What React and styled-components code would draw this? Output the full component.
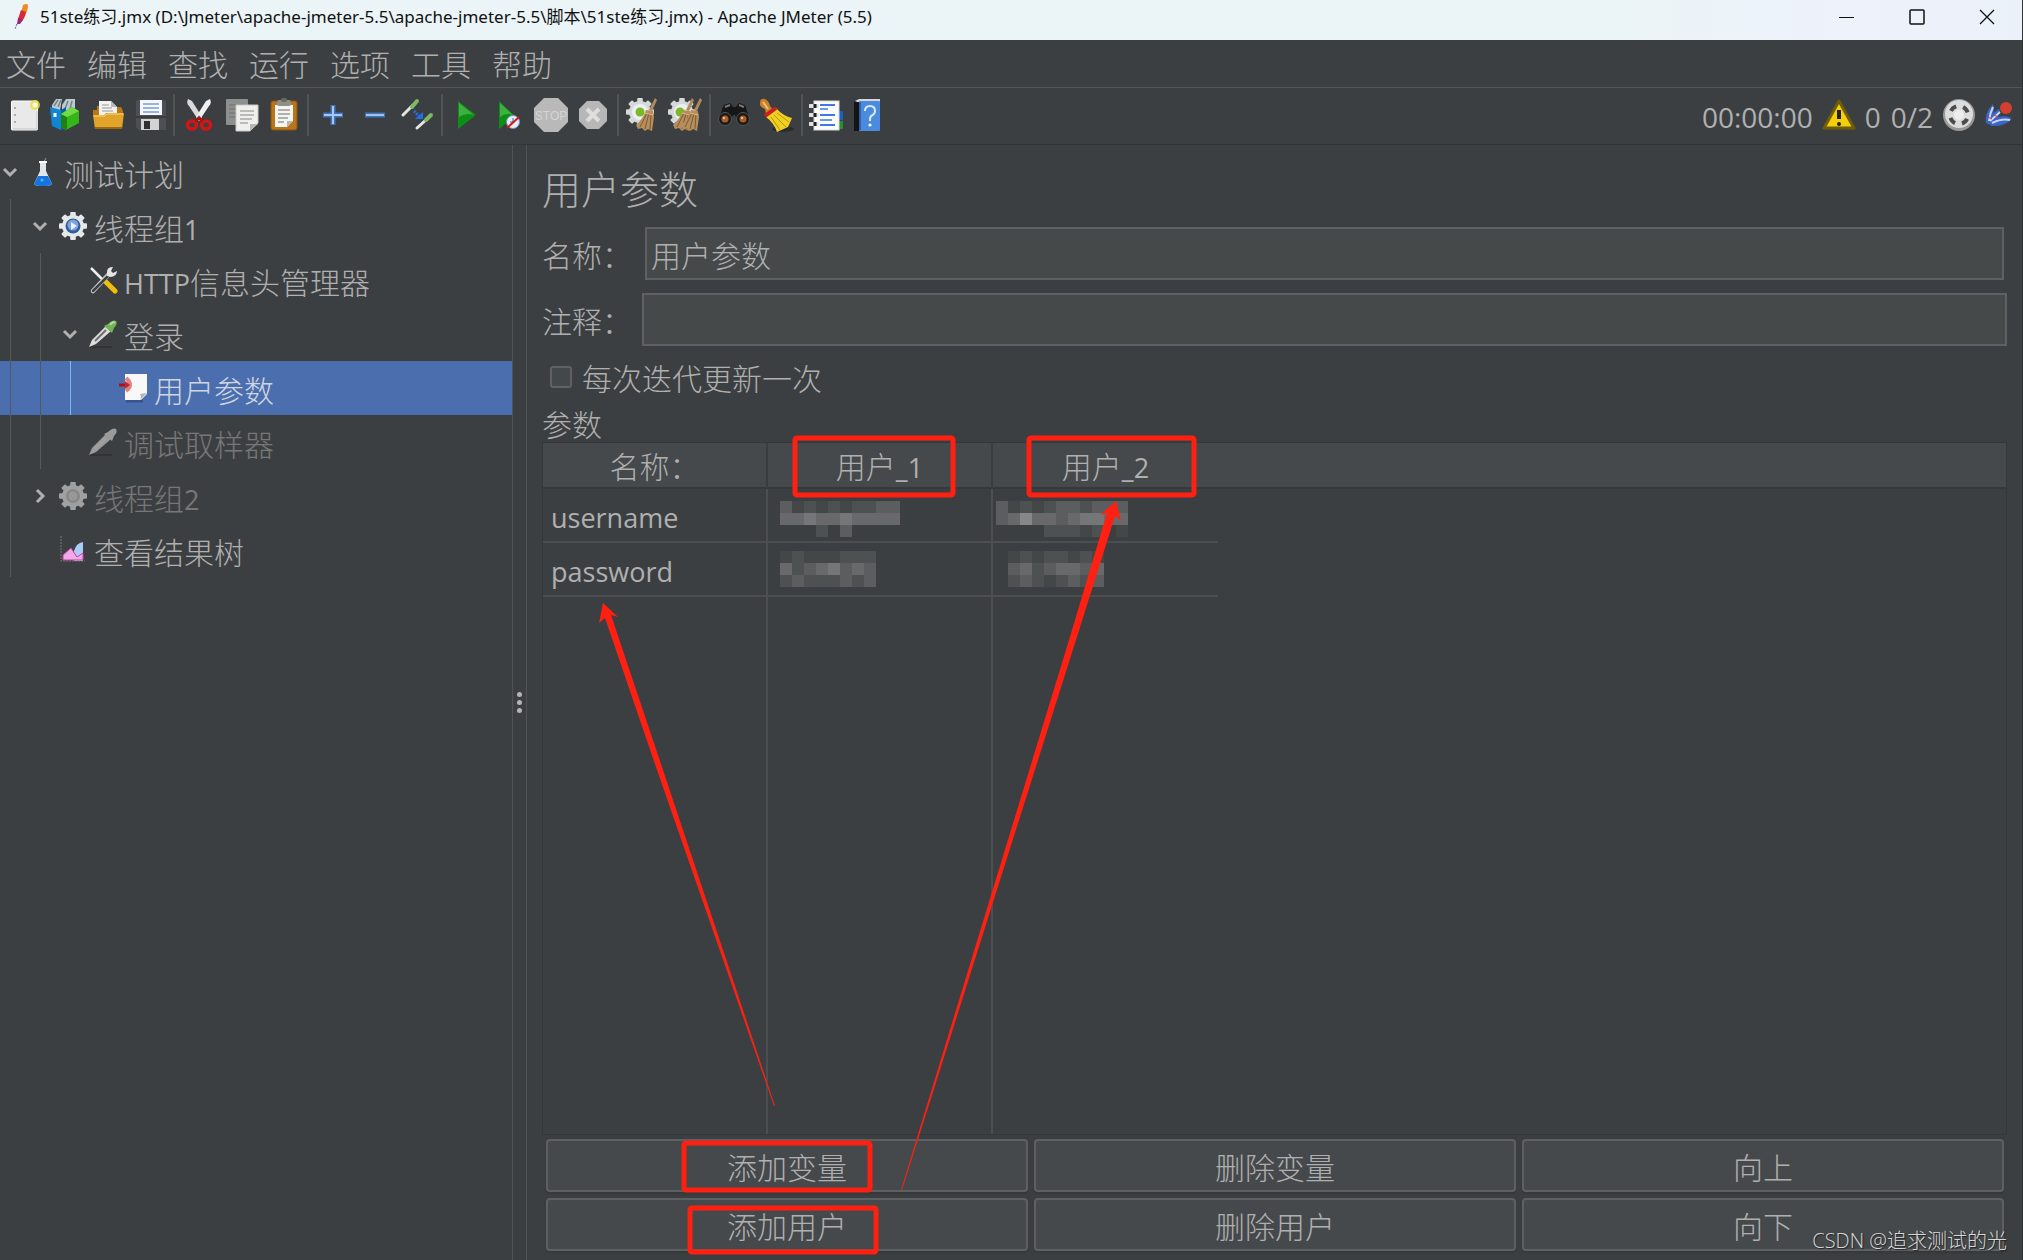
import React, { useState } from "react";
import styled, { createGlobalStyle } from "styled-components";

const cjk = `"Noto Sans CJK SC", sans-serif`;
const latin = `"Open Sans", "Noto Sans CJK SC", sans-serif`;

const GlobalStyle = createGlobalStyle`
  * { box-sizing: border-box; }
  html, body, #root { height: 100%; }
  body {
    margin: 0;
    background: #3c3f41;
    color: #b0b0b0;
    font-family: ${ cjk };
    font-size: 30px;
    font-weight: 300;
  }
  button, input { font: inherit; color: inherit; }
`;

/* ---------- icons ---------- */

const gearTeeth = [ 0, 45, 90, 135, 180, 225, 270, 315 ];

function Gear( { cx, cy, r, fill } ){
  return ( <g fill={ fill }>
    <circle cx={ cx } cy={ cy } r={ r * 0.78 } />
    { gearTeeth.map( a => (
      <rect
        key={ a }
        x={ cx - r * 0.2 } y={ cy - r } width={ r * 0.4 } height={ r * 0.5 } rx="1"
        transform={ `rotate(${ a } ${ cx } ${ cy })` }
      />
    ) ) }
  </g> );
}

function Broom( { x } ){
  return ( <g transform={ `translate(${ x } 0)` }>
    <path d="M29 1 L31 3 L26 14 L23 13 Z" fill="#b08a5e" />
    <path d="M20 13 L27 14 L28 20 L26 34 L22 32 L19 34 L16 31 L12 32 L10 28 Q17 22 20 13 Z" fill="#b68d5c" />
    <path d="M21 16 L14 30 M23 16 L19 32 M25 17 L24 32" stroke="#7d5a34" fill="none" />
    <path d="M19 16 L27 18" stroke="#e0bd8a" fill="none" />
  </g> );
}

function Pipette( { gray } ){
  return ( <g>
    <path d="M2 28 H24" stroke="#2b2d2e" strokeWidth="2" opacity="0.7" />
    <path d="M18 7 L23 12 L8 25 L1 28 L4 21 Z" fill={ gray ? "#9b9b9b" : "#dcdcdc" } />
    <path d="M18 11 L7 22" stroke={ gray ? "#a0a0a0" : "#6b706e" } strokeWidth="2" />
    <path d="M16 7 L20 5 Q25 0 28 2 Q30 5 26 9 L24 14 Z" fill={ gray ? "#9b9b9b" : "#72b356" } />
    { !gray && <path d="M22 6 Q25 2 27 4" stroke="#b4dd9a" strokeWidth="2" fill="none" /> }
  </g> );
}

const toolIcons = {
  new: <g>
    <rect x="6.5" y="4" width="26" height="29" rx="1" fill="#e9e9e9" stroke="#fff" />
    <path d="M8 32 H32 V14" stroke="#c2c2c2" fill="none" />
    <path d="M10 10 v2 M10 17 v2 M10 24 v2" stroke="#999" strokeWidth="1.5" />
    <circle cx="30" cy="8" r="5" fill="#eadb4b" opacity="0.8" />
    <circle cx="30" cy="8" r="2.5" fill="#fffbd0" />
  </g>,
  templates: <g>
    <path d="M5 8 L9 2 H15 L13 13 H5 Z M15 8 L19 2 H28 V14 H15 Z" fill="#bccbd0" />
    <path d="M7 9 L11 3 M11 10 L14 3 M18 12 L21 4 M23 12 L25 4" stroke="#73858b" strokeWidth="1.5" />
    <path d="M3 10 L14 13 V33 L5 29 Z" fill="#0e86d4" />
    <path d="M14 13 L19 10 V30 L14 33 Z" fill="#0a5f9e" />
    <path d="M8 16 v4" stroke="#fff" strokeWidth="3" />
    <path d="M14 17 L25 10 L32 14 V26 L19 33 L14 30 Z" fill="#36b51b" />
    <path d="M14 17 L20 20 V33 L14 30 Z" fill="#1f7f10" />
    <path d="M14 17 L25 10 L32 14 L20 20 Z" fill="#70db45" />
  </g>,
  open: <g>
    <path d="M4 18 V13 H8 V9 H12 V20 H4 Z M28 10 H32 L34 14 V20 H28 Z" fill="#b87914" />
    <path d="M10 4 H22 L28 10 V20 H10 Z" fill="#f2f2f2" />
    <path d="M22 4 V10 H28 Z" fill="#b9b9b9" />
    <path d="M13 8 h7 M13 11 h10 M13 14 h11" stroke="#999" />
    <path d="M4 18 H15 L17 16 H35 L33 32 H6 Z" fill="#e2a32b" />
    <path d="M5 19 H16 L18 17 H34" stroke="#f9d273" fill="none" />
    <path d="M6 31 H33" stroke="#9c680d" strokeWidth="2" />
  </g>,
  save: <g>
    <path d="M5 5 Q5 3 7 3 H33 Q35 3 35 5 V33 H8 L5 30 Z" fill="#4c4f53" />
    <rect x="9" y="3" width="22" height="15" fill="#f3f7fc" />
    <path d="M12 7 h16 M12 11 h16 M12 15 h16" stroke="#7e9fc9" strokeWidth="1.5" />
    <path d="M5 20 H35" stroke="#26282a" />
    <rect x="10" y="22" width="18" height="11" fill="#d3d3d3" />
    <rect x="13" y="24" width="6" height="8" fill="#2d2f31" />
  </g>,
  cut: <g>
    <path d="M7 2 Q5 6 8 9 L18 24 L21 20 L11 4 Z" fill="#dadcdc" />
    <path d="M29 2 Q31 6 28 9 L18 24 L15 20 L25 4 Z" fill="#f1f1f1" />
    <circle cx="18" cy="20" r="1.5" fill="#888" />
    <ellipse cx="11" cy="28" rx="4.5" ry="4" fill="none" stroke="#d41515" strokeWidth="3.5" />
    <ellipse cx="25" cy="28" rx="4.5" ry="4" fill="none" stroke="#d41515" strokeWidth="3.5" />
    <path d="M14 24 L18 21 L22 24" stroke="#b30e0e" strokeWidth="3" fill="none" />
  </g>,
  copy: <g>
    <rect x="3" y="2" width="22" height="26" rx="1" fill="#8e9090" />
    <path d="M6 8 h15 M6 12 h15 M6 16 h15 M6 20 h15" stroke="#6f7171" />
    <path d="M13 8 H35 V26 L27 34 H13 Z" fill="#efefec" stroke="#c9c9c5" />
    <path d="M17 14 h14 M17 18 h14 M17 22 h12 M17 26 h8" stroke="#aaa" strokeWidth="1.5" />
    <path d="M27 34 V27 H35 Z" fill="#b7b7b2" />
  </g>,
  paste: <g>
    <rect x="6" y="4" width="26" height="29" rx="2" fill="#b9751a" stroke="#8a5410" />
    <path d="M10 8 H28 V24 L22 30 H10 Z" fill="#f4f4f1" />
    <rect x="12" y="3" width="14" height="6" rx="2" fill="#8f8f88" />
    <rect x="16" y="1" width="6" height="4" rx="2" fill="#696963" />
    <path d="M13 13 h12 M13 17 h12 M13 21 h10 M13 25 h6" stroke="#999" strokeWidth="1.5" />
    <path d="M22 30 V24 H28 Z" fill="#b7b7b2" />
  </g>,
  expand: <g>
    <path d="M18 8 V28 M8 18 H28" stroke="#3f74bd" strokeWidth="5" />
    <path d="M18 9 V27 M9 18 H27" stroke="#a5c6ee" strokeWidth="2" />
  </g>,
  collapse: <g>
    <path d="M8 18 H28" stroke="#3f74bd" strokeWidth="5" />
    <path d="M9 18 H27" stroke="#9fc1eb" strokeWidth="2" />
  </g>,
  toggle: <g>
    <path d="M4 18 L14 8" stroke="#e5e5e5" strokeWidth="3" strokeLinecap="round" />
    <path d="M13 10 L18 4" stroke="#7db864" strokeWidth="4" strokeLinecap="round" />
    <path d="M18 31 L28 22" stroke="#e5e5e5" strokeWidth="3" strokeLinecap="round" />
    <path d="M27 23 L32 18" stroke="#7db864" strokeWidth="4" strokeLinecap="round" />
    <path d="M15 14 L20 19" stroke="#1e6fe8" strokeWidth="3" strokeDasharray="2 1" />
    <path d="M24 15 V22 H16 Z" fill="#1e6fe8" />
  </g>,
  start: <g>
    <path d="M9 4 L27 18 L9 32 Z" fill="#0d8f14" />
    <path d="M10 6 L25 18 Q17 15 10 20 Z" fill="#3fae43" />
  </g>,
  startNoTimers: <g>
    <path d="M8 4 L24 19 L8 32 Z" fill="#0d8f14" />
    <path d="M9 6 L22 18 Q15 15 9 20 Z" fill="#3fae43" />
    <circle cx="22" cy="25" r="6.5" fill="#e8eef6" stroke="#6d93bf" />
    <path d="M22 21 V25 H19" stroke="#3b6fae" fill="none" />
    <path d="M16 31 L28 20" stroke="#d21616" strokeWidth="2" />
  </g>,
  stop: <g>
    <path d="M11 1 H25 L35 11 V25 L25 35 H11 L1 25 V11 Z" fill="#b9b9b9" />
    <text x="18" y="23" textAnchor="middle" fontFamily="Liberation Sans" fontSize="12" fontWeight="400" fill="#d4d4d4">STOP</text>
  </g>,
  shutdown: <g>
    <path d="M12 4 H24 L32 12 V24 L24 32 H12 L4 24 V12 Z" fill="#b7b7b7" />
    <path d="M12 12 L24 24 M24 12 L12 24" stroke="#dedede" strokeWidth="4" />
  </g>,
  clear: <g>
    <Gear cx={ 15 } cy={ 15 } r={ 14 } fill="#d5d9d9" />
    <circle cx="15" cy="15" r="8" fill="#eef0f0" />
    <circle cx="15" cy="15" r="4.5" fill="#7bb928" />
    <Broom x={ 1 } />
  </g>,
  clearAll: <g>
    <Gear cx={ 15 } cy={ 15 } r={ 14 } fill="#d5d9d9" />
    <circle cx="15" cy="15" r="8" fill="#eef0f0" />
    <circle cx="13" cy="15" r="4.5" fill="#7bb928" />
    <Broom x={ -4 } />
    <Broom x={ 4 } />
  </g>,
  search: <g>
    <path d="M7 8 L13 6 L16 10 H19 L22 6 L28 8 L33 23 H20 L18 18 H16 L14 23 H1 Z" fill="#161616" />
    <path d="M8 10 L13 8 M22 8 L27 10" stroke="#777" strokeWidth="2" />
    <circle cx="8" cy="22" r="6.5" fill="#1a1a1a" stroke="#555" />
    <circle cx="26" cy="22" r="6.5" fill="#1a1a1a" stroke="#555" />
    <circle cx="8" cy="22" r="3.5" fill="#a85c28" />
    <circle cx="26" cy="22" r="3.5" fill="#a85c28" />
    <circle cx="7" cy="21" r="1.2" fill="#eab98d" />
    <circle cx="25" cy="21" r="1.2" fill="#eab98d" />
  </g>,
  searchReset: <g>
    <ellipse cx="24" cy="32" rx="11" ry="3" fill="#2a2c2d" />
    <path d="M1 6 Q1 1 6 2 Q10 4 11 9 L14 13 L7 17 L6 12 Q0 10 1 6 Z" fill="#c9822b" />
    <path d="M4 5 L9 12" stroke="#f3c274" strokeWidth="2" />
    <path d="M17 11 Q24 19 33 21 L29 30 L18 35 Q15 26 7 20 Z" fill="#efcf22" />
    <path d="M15 18 L27 30 M12 20 L21 33 M18 16 L30 25" stroke="#b8960b" fill="none" />
    <path d="M6 19 L17 11" stroke="#cf1d1d" strokeWidth="4" />
  </g>,
  functions: <g>
    <rect x="26" y="14" width="8" height="9" fill="#1b5fc4" />
    <rect x="26" y="24" width="8" height="8" fill="#27902b" />
    <rect x="5" y="4" width="25" height="29" fill="#fbfbfb" stroke="#d8d8d8" />
    <path d="M11 8 h15 M11 18 h15 M11 28 h15" stroke="#3e7be0" strokeWidth="2" />
    <path d="M11 12 h8 M11 23 h12" stroke="#3e7be0" strokeWidth="1.5" />
    <path d="M1 9 h7 M1 18 h7 M1 27 h7" stroke="#dfdfdf" strokeWidth="4" strokeLinecap="round" />
    <path d="M6 7 v4 M6 16 v4 M6 25 v4" stroke="#1f1f1f" strokeWidth="3" />
  </g>,
  help: <g>
    <path d="M3 5 L8 2 V34 H3 Z" fill="#141414" />
    <path d="M4 4 L8 2 H29 V5 H6 Z" fill="#d6d6d6" />
    <rect x="8" y="4" width="21" height="30" rx="1" fill="#4a8be0" />
    <path d="M9 5 V33" stroke="#2d62ad" strokeWidth="2" />
    <path d="M14 14 Q14 9 19 9 Q24 9 24 14 Q24 17 20 19 Q19 20 19 24" stroke="#dce9fb" strokeWidth="2" fill="none" />
    <circle cx="19" cy="28" r="1.6" fill="#fff" />
  </g>,
};

const treeIcons = {
  plan: <g>
    <path d="M15 6 L18 1" stroke="#999" />
    <path d="M12 6 H18 V14 L24 27 Q23 29 15 29 Q7 29 6 27 L12 14 Z" fill="#dfe6ec" />
    <path d="M10 19 H20 L24 27 Q23 29 15 29 Q7 29 6 27 Z" fill="#1574dd" />
    <path d="M11 5 H19" stroke="#fff" strokeWidth="2" />
    <circle cx="14" cy="23" r="1.5" fill="#5fb0ff" />
  </g>,
  group: <g>
    <Gear cx={ 15 } cy={ 15 } r={ 14 } fill="#e6e8ea" />
    <circle cx="15" cy="15" r="7.5" fill="#2f5d9f" />
    <circle cx="15" cy="14" r="5.5" fill="#7da3d6" />
    <path d="M13 11 L19 15 L13 19 Z" fill="#e8f0fb" />
  </g>,
  groupOff: <g>
    <Gear cx={ 15 } cy={ 15 } r={ 14 } fill="#a0a0a0" />
    <circle cx="15" cy="15" r="7" fill="#878787" />
    <circle cx="15" cy="15" r="4.5" fill="#989898" />
  </g>,
  config: <g>
    <path d="M3 3 L17 17" stroke="#eee" strokeWidth="2.5" />
    <path d="M17 16 L27 26" stroke="#f2bd08" strokeWidth="5" strokeLinecap="round" />
    <path d="M21 9 L5 26" stroke="#ccc" strokeWidth="4.5" strokeLinecap="round" />
    <path d="M20 11 L5 26" stroke="#3c3f41" strokeWidth="2.5" strokeLinecap="round" />
    <path d="M25 2 Q19 2 19 7 L19 11 L23 12 Q29 11 29 6 L25 8 L23 6 Z" fill="#e4e4e4" />
  </g>,
  sampler: <Pipette />,
  samplerOff: <Pipette gray />,
  params: <g>
    <path d="M8 28 H25" stroke="#2d4678" strokeWidth="3" opacity="0.6" />
    <path d="M7 1 H29 V21 L23 27 H7 Z" fill="#f8f8f8" />
    <path d="M22 27 Q24 23 22 21 L29 20 Z" fill="#b4b4b4" />
    <path d="M8 5 Q16 12 8 18" stroke="#e28383" strokeWidth="4" fill="none" />
    <path d="M1 12 H8" stroke="#b30f14" strokeWidth="3" />
    <path d="M7 8 L12 12 L7 16 Z" fill="#c3262b" />
  </g>,
  results: <g>
    <path d="M3 1 V26 H27" stroke="#777" fill="none" strokeDasharray="2 1" />
    <path d="M16 26 V16 Q18 8 25 7 V26 Z" fill="#a9cbf5" />
    <path d="M5 25 V20 L13 13 L19 22 L25 18 V25 Z" fill="#f1a8e6" stroke="#c2419f" />
  </g>,
};

/* ---------- styled parts ---------- */

const Window = styled.div`
  position: relative;
  min-height: 100%;
  height: 100vh;
  display: flex;
  flex-direction: column;
  overflow: hidden;
  border-right: 1px solid #2f3234;
`;
const TitleBar = styled.header`
  height: 40px;
  flex-shrink: 0;
  display: flex;
  align-items: center;
  padding: 0 0 7px 12px;
  background: linear-gradient( 90deg, #ebf4f7 80%, #eef2fb 92%, #ebf1f8 );
  color: #111;
  font-family: "Noto Sans", "Noto Sans CJK SC", sans-serif;
  font-size: 17px;
  font-weight: 400;
`;
const TitleText = styled.span`
  flex: 1;
  padding-left: 8px;
  line-height: 32px;
`;
const WindowButton = styled.button`
  width: 70px;
  height: 32px;
  padding: 0;
  border: 0;
  background: none;
  display: grid;
  place-items: center;
`;
const MenuBar = styled.nav`
  display: flex;
  flex-shrink: 0;
  gap: 21px;
  height: 48px;
  padding: 0 6px;
  border-bottom: 1px solid #555;
`;
const MenuItem = styled.button`
  height: 46px;
  padding: 0;
  border: 0;
  background: none;
  line-height: 46px;
`;
const ToolBar = styled.div`
  display: flex;
  align-items: center;
  flex-shrink: 0;
  height: 57px;
  padding: 0 8px 2px 2px;
  border-bottom: 1px solid #323537;
`;
const ToolButton = styled.button`
  width: 42px;
  height: 42px;
  padding: 0;
  border: 0;
  background: none;
  display: grid;
  place-items: center;
`;
const Divider = styled.span`
  width: 2px;
  height: 42px;
  margin: 0 3px;
  background: #515354;
`;
const Status = styled.div`
  margin-left: auto;
  display: flex;
  align-items: center;
  gap: 8px;
  font-family: ${ latin };
  font-size: 28px;
  font-weight: 400;
`;
const Counter = styled.span`
  padding: 4px 1px 0;
`;
const Body = styled.div`
  flex: 1;
  min-height: 0;
  display: flex;
`;
const Tree = styled.ul`
  width: 512px;
  flex-shrink: 0;
  margin: 0;
  padding: 0;
  list-style: none;
`;
const TreeRow = styled.li`
  display: flex;
  align-items: center;
  height: 54px;
  background: ${ p => p.$selected ? "#4b6eaf" : "none" };
  color: ${ p => p.$selected ? "#d0d6e2" : p.$off ? "#777777" : "inherit" };
`;
const Indent = styled.span`
  width: 20px;
  height: 100%;
  margin-left: 10px;
  border-left: 1px solid ${ p => p.$active ? "#7fb5f0" : "#565859" };
`;
const Twisty = styled.button`
  width: 20px;
  height: 30px;
  padding: 0;
  border: 0;
  background: none;
  display: grid;
  place-items: center;
`;
const TreeIcon = styled.svg`
  width: 30px;
  height: 30px;
  margin: 0 6px 0 8px;
`;
const TreeLabel = styled.span`
  padding-top: 2px;
  line-height: 52px;
  white-space: nowrap;
`;
const Latin = styled.span`
  font-family: ${ latin };
  font-size: 27px;
  font-weight: 400;
  line-height: 1;
`;
const Splitter = styled.div`
  width: 15px;
  flex-shrink: 0;
  display: flex;
  flex-direction: column;
  align-items: center;
  justify-content: center;
  gap: 3px;
  border: solid #515354;
  border-width: 0 1px;
`;
const Dot = styled.i`
  width: 5px;
  height: 5px;
  border-radius: 50%;
  background: #b5b5b5;
`;
const Main = styled.main`
  flex: 1;
  min-width: 0;
  display: flex;
  flex-direction: column;
  padding: 5px 15px 9px 15px;
`;
const Heading = styled.h1`
  margin: 0 0 3px;
  font-size: 39px;
  font-weight: 300;
  line-height: 74px;
`;
const Field = styled.div`
  display: flex;
  align-items: center;
  margin-bottom: 13px;
`;
const FieldLabel = styled.label`
  width: 100px;
`;
const TextInput = styled.input`
  flex: 1;
  min-width: 0;
  height: 53px;
  margin: 0 ${ p => p.$inset ? 3 : 0 }px;
  padding: 0 4px;
  border: 2px solid #5e6061;
  background: #45494a;
  outline: none;
`;
const CheckRow = styled.label`
  display: flex;
  align-items: center;
  gap: 10px;
  height: 54px;
  margin-top: -9px;
  padding-left: 8px;
`;
const CheckBox = styled.input`
  appearance: none;
  width: 22px;
  height: 22px;
  margin: 0;
  border: 2px solid #5f6162;
  border-radius: 3px;
  background: #43494a;
`;
const Caption = styled.div`
  line-height: 38px;
`;
const TableFrame = styled.div`
  flex: 1;
  min-height: 0;
  border: 1px solid #34383a;
`;
const Table = styled.table`
  width: 100%;
  height: 100%;
  table-layout: fixed;
  border-collapse: separate;
  border-spacing: 0;
`;
const HeadCell = styled.th`
  width: ${ p => p.$rest ? "auto" : "225px" };
  height: 46px;
  padding: 0;
  background: #45494b;
  border-right: ${ p => p.$rest || p.$last ? 0 : 2 }px solid #3a3d3f;
  border-bottom: 2px solid #36393b;
  font-weight: 300;
  line-height: 44px;
`;
const Cell = styled.td`
  height: ${ p => p.$fill ? "auto" : "54px" };
  padding: 0 0 0 8px;
  border: solid #4c4e4f;
  border-width: 0 ${ p => p.$last ? 0 : 2 }px ${ p => p.$fill ? 0 : 2 }px 0;
  line-height: 48px;
`;
const Mosaic = styled.svg`
  display: block;
  height: 36px;
  margin: ${ p => p.$drop }px 0 0 ${ p => p.$shift }px;
`;
const ButtonGrid = styled.div`
  display: grid;
  grid-template-columns: repeat( 3, 1fr );
  gap: 6px;
  padding: 4px 3px 0 4px;
`;
const Action = styled.button`
  height: 53px;
  padding: 0;
  border: 2px solid #5e6061;
  border-radius: 4px;
  background: #45494b;
  box-shadow: 0 2px 2px #36393b;
`;
const Marks = styled.svg`
  position: absolute;
  inset: 0;
  width: 100%;
  height: 100%;
  pointer-events: none;
`;
const Watermark = styled.div`
  position: absolute;
  right: 15px;
  bottom: 4px;
  font-family: ${ latin };
  font-size: 20px;
  line-height: 30px;
  color: #d8d8d8;
  text-shadow: 1px 1px 1px #222;
`;

/* ---------- data ---------- */

const menus = [ "文件", "编辑", "查找", "运行", "选项", "工具", "帮助" ];

const tools = [
  [ "new", "templates", "open", "save" ],
  [ "cut", "copy", "paste" ],
  [ "expand", "collapse", "toggle" ],
  [ "start", "startNoTimers", "stop", "shutdown" ],
  [ "clear", "clearAll" ],
  [ "search", "searchReset" ],
  [ "functions", "help" ],
];

const nodes = [
  { level: 0, icon: "plan", label: "测试计划", twisty: "open" },
  { level: 1, icon: "group", label: "线程组", tail: "1", twisty: "open" },
  { level: 2, icon: "config", head: "HTTP", label: "信息头管理器" },
  { level: 2, icon: "sampler", label: "登录", twisty: "open" },
  { level: 3, icon: "params", label: "用户参数", selected: true },
  { level: 2, icon: "samplerOff", label: "调试取样器", off: true },
  { level: 1, icon: "groupOff", label: "线程组", tail: "2", off: true, twisty: "closed" },
  { level: 1, icon: "results", label: "查看结果树" },
];

// gray levels, one string per line of 12px blocks; a dot is an empty block
const mosaics = {
  user1: [ "5243434455", "6676676666", "...4.5...." ],
  user2: [ "53434554555", "56866567766", "....44434.3" ],
  pass1: [ "34333444", "64567565", "45444545" ],
  pass2: [ "34344343", "56456656", "45434545" ],
};
const grays = { 2: "#454647", 3: "#434748", 4: "#4e5152", 5: "#5c5d5e", 6: "#69696b", 7: "#757678", 8: "#858887" };

const rows = [
  { name: "username", drop: 7, cells: [ { id: "user1", shift: 4 }, { id: "user2", shift: -5 } ] },
  { name: "password", drop: 0, cells: [ { id: "pass1", shift: 4 }, { id: "pass2", shift: 7 } ] },
];

const actions = [ "添加变量", "删除变量", "向上", "添加用户", "删除用户", "向下" ];

function Blocks( { id, shift, drop } ){
  const lines = mosaics[ id ];
  return ( <Mosaic width={ lines[ 0 ].length * 12 } $shift={ shift } $drop={ drop }>
    { lines.map( ( line, y ) => line.split( "" ).map( ( c, x ) => c !== "." && (
      <rect key={ `${ x }-${ y }` } x={ x * 12 } y={ y * 12 } width="12" height="12" fill={ grays[ c ] } />
    ) ) ) }
  </Mosaic> );
}

function App(){
  const [ name, setName ] = useState( "用户参数" );
  const [ comment, setComment ] = useState( "" );
  const [ each, setEach ] = useState( false );

  return ( <>
    <GlobalStyle />
    <Window>
      <TitleBar>
        <svg width="20" height="28" viewBox="0 0 20 28">
          <path d="M11 2 Q15 0 16 2 Q16 8 13 12 L9 10 Z" fill="#ee8a22" />
          <path d="M9 7 L14 9 Q13 15 10 18 L6 16 Z" fill="#d92b35" />
          <path d="M6 15 L11 17 L8 21 L5 21 Z" fill="#94277e" />
          <path d="M5 21 L3 26" stroke="#6a4fb0" strokeDasharray="2 1" />
        </svg>
        <TitleText>51ste练习.jmx (D:\Jmeter\apache-jmeter-5.5\apache-jmeter-5.5\脚本\51ste练习.jmx) - Apache JMeter (5.5)</TitleText>
        <WindowButton aria-label="minimize">
          <svg width="16" height="16"><path d="M0 8.5 H15" stroke="#111" /></svg>
        </WindowButton>
        <WindowButton aria-label="maximize">
          <svg width="16" height="16"><rect x="1" y="1" width="14" height="14" rx="1" fill="none" stroke="#111" strokeWidth="1.5" /></svg>
        </WindowButton>
        <WindowButton aria-label="close">
          <svg width="16" height="16"><path d="M1 1 L15 15 M15 1 L1 15" stroke="#111" strokeWidth="1.3" /></svg>
        </WindowButton>
      </TitleBar>

      <MenuBar>
        { menus.map( m => <MenuItem key={ m }>{ m }</MenuItem> ) }
      </MenuBar>

      <ToolBar>
        { tools.map( ( group, i ) => ( <React.Fragment key={ i }>
          { i > 0 && <Divider /> }
          { group.map( t => (
            <ToolButton key={ t } aria-label={ t }>
              <svg width="36" height="36" viewBox="0 0 36 36">{ toolIcons[ t ] }</svg>
            </ToolButton>
          ) ) }
        </React.Fragment> ) ) }
        <Status>
          <Counter>00:00:00</Counter>
          <svg width="34" height="32" viewBox="0 0 34 32">
            <path d="M17 2 L32 29 H2 Z" fill="#f4cf0a" stroke="#6e5d06" strokeWidth="3" strokeLinejoin="round" />
            <path d="M17 11 V20" stroke="#222" strokeWidth="4" />
            <circle cx="17" cy="25" r="2" fill="#222" />
          </svg>
          <Counter>0</Counter>
          <Counter>0/2</Counter>
          <svg width="34" height="34" viewBox="0 0 34 34">
            <circle cx="17" cy="17" r="16" fill="#9a9a9a" />
            <circle cx="17" cy="16" r="14" fill="#dcdcdc" />
            <circle cx="17" cy="17" r="9" fill="none" stroke="#4a4c4e" strokeWidth="4" strokeDasharray="7 7.137" strokeDashoffset="-4" />
            <circle cx="17" cy="17" r="5" fill="#ededed" />
          </svg>
          <svg width="30" height="32" viewBox="0 0 30 32">
            <path d="M2 24 Q0 14 9 5 Q11 10 9 14 L15 10 Q18 14 13 18 Q24 16 28 20 Q20 28 8 27 Z" fill="#3c63c8" />
            <path d="M5 22 Q6 14 9 8 M6 22 L16 13 M8 24 Q18 19 26 21" stroke="#c6d6f5" strokeWidth="2" fill="none" />
            <path d="M4 18 L8 20 M10 16 L14 18" stroke="#d63b3b" />
            <circle cx="22" cy="9" r="6" fill="#d4402f" />
          </svg>
        </Status>
      </ToolBar>

      <Body>
        <Tree>
          { nodes.map( ( n, i ) => (
            <TreeRow key={ i } $selected={ n.selected } $off={ n.off }>
              { Array.from( { length: n.level }, ( _, g ) => <Indent key={ g } $active={ g === 2 } /> ) }
              { n.twisty
                ? <Twisty aria-label={ n.twisty }>
                  <svg width="16" height="16" viewBox="0 0 16 16">
                    <path
                      d={ n.twisty === "open" ? "M2 5 L8 11 L14 5" : "M5 2 L11 8 L5 14" }
                      fill="none" stroke="#b0b0b0" strokeWidth="3"
                    />
                  </svg>
                </Twisty>
                : <Twisty as="span" /> }
              <TreeIcon viewBox="0 0 30 30">{ treeIcons[ n.icon ] }</TreeIcon>
              <TreeLabel>
                { n.head && <Latin>{ n.head }</Latin> }
                { n.label }
                { n.tail && <Latin>{ n.tail }</Latin> }
              </TreeLabel>
            </TreeRow>
          ) ) }
        </Tree>

        <Splitter><Dot /><Dot /><Dot /></Splitter>

        <Main>
          <Heading>用户参数</Heading>
          <Field>
            <FieldLabel htmlFor="name">名称：</FieldLabel>
            <TextInput id="name" $inset value={ name } onChange={ e => setName( e.target.value ) } />
          </Field>
          <Field>
            <FieldLabel htmlFor="comment">注释：</FieldLabel>
            <TextInput id="comment" value={ comment } onChange={ e => setComment( e.target.value ) } />
          </Field>
          <CheckRow>
            <CheckBox type="checkbox" checked={ each } onChange={ e => setEach( e.target.checked ) } />
            每次迭代更新一次
          </CheckRow>
          <Caption>参数</Caption>
          <TableFrame>
            <Table>
              <thead>
                <tr>
                  <HeadCell>名称：</HeadCell>
                  <HeadCell>用户<Latin>_1</Latin></HeadCell>
                  <HeadCell $last>用户<Latin>_2</Latin></HeadCell>
                  <HeadCell $rest />
                </tr>
              </thead>
              <tbody>
                { rows.map( r => (
                  <tr key={ r.name }>
                    <Cell><Latin>{ r.name }</Latin></Cell>
                    { r.cells.map( ( c, i ) => (
                      <Cell key={ c.id } $last={ i === 1 }>
                        <Blocks id={ c.id } shift={ c.shift } drop={ r.drop } />
                      </Cell>
                    ) ) }
                    <td />
                  </tr>
                ) ) }
                <tr>
                  <Cell $fill />
                  <Cell $fill />
                  <Cell $fill $last />
                  <td />
                </tr>
              </tbody>
            </Table>
          </TableFrame>
          <ButtonGrid>
            { actions.map( a => <Action key={ a }>{ a }</Action> ) }
          </ButtonGrid>
        </Main>
      </Body>

      <Marks>
        <g fill="none" stroke="#ff2012" strokeWidth="5">
          <rect x="795" y="438" width="158" height="57" rx="2" />
          <rect x="1029" y="438" width="165" height="57" rx="2" />
          <rect x="684" y="1143" width="186" height="47" rx="2" />
          <rect x="690" y="1208" width="186" height="44" rx="2" />
        </g>
        <g fill="#ff2012">
          <path d="M603 603 L618 617 L611 615 L663 770 L775 1106 L774 1106 L657 770 L605 618 L599 623 Z" />
          <path d="M1116 501 L1121 521 L1115 516 L1076 640 L902 1190 L901 1190 L1069 640 L1107 513 L1100 515 Z" />
        </g>
      </Marks>
      <Watermark>CSDN @追求测试的光</Watermark>
    </Window>
  </> );
}

export default App;
